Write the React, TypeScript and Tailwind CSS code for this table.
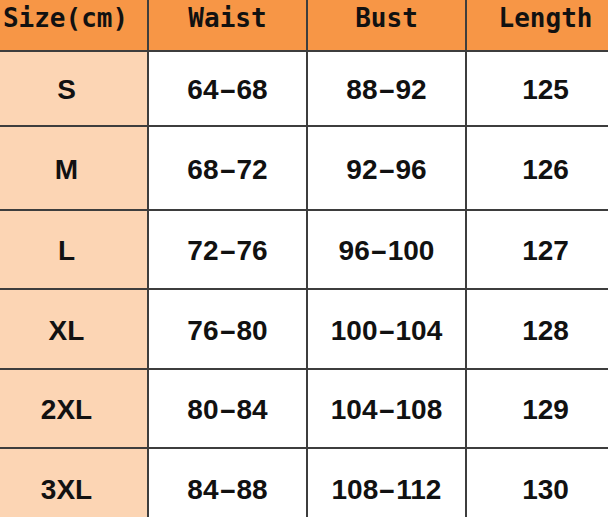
import React from "react";

const headers = ["Size(cm)", "Waist", "Bust", "Length"];
const rows: { size: string; waist: string; bust: string; length: string; h: string }[] = [
  { size: "S", waist: "64-68", bust: "88-92", length: "125", h: "h-[75px]" },
  { size: "M", waist: "68-72", bust: "92-96", length: "126", h: "h-[84px]" },
  { size: "L", waist: "72-76", bust: "96-100", length: "127", h: "h-[79px]" },
  { size: "XL", waist: "76-80", bust: "100-104", length: "128", h: "h-[80px]" },
  { size: "2XL", waist: "80-84", bust: "104-108", length: "129", h: "h-[79px]" },
  { size: "3XL", waist: "84-88", bust: "108-112", length: "130", h: "h-[80px]" },
];

function Range({ v }: { v: string }) {
  const parts = v.split("-");
  if (parts.length < 2) return <>{v}</>;
  return (
    <>
      {parts[0]}
      <span className="inline-block w-[18px] text-center scale-x-[1.9]">-</span>
      {parts[1]}
    </>
  );
}

const cellBase =
  "flex items-center justify-center border-r-2 border-b-2 border-[#3d3d3d] text-[#111] whitespace-nowrap";
const dataFont = "font-['Liberation_Sans',Arial,sans-serif] font-bold text-[28px] leading-none";

export default function App() {
  return (
    <div className="w-[608px] h-[517px] overflow-hidden bg-white">
      <div className="grid grid-cols-[149px_159px_159px_159px] w-[626px]">
        {headers.map((h, i) => (
          <div
            key={h}
            className={`${cellBase} h-[52px] bg-[#f79646] items-start font-['DejaVu_Sans_Mono','Liberation_Mono',monospace] font-bold text-[26px] leading-[36px] ${
              i === 0 ? "pr-[16px]" : ""
            }`}
          >
            {h}
          </div>
        ))}
        {rows.map((r) => (
          <React.Fragment key={r.size}>
            <div className={`${cellBase} ${r.h} ${dataFont} bg-[#fcd5b4] pr-[14px] pt-[3px]`}>{r.size}</div>
            <div className={`${cellBase} ${r.h} ${dataFont} bg-white pt-[3px]`}>
              <Range v={r.waist} />
            </div>
            <div className={`${cellBase} ${r.h} ${dataFont} bg-white pt-[3px]`}>
              <Range v={r.bust} />
            </div>
            <div className={`${cellBase} ${r.h} ${dataFont} bg-white pt-[3px]`}>{r.length}</div>
          </React.Fragment>
        ))}
      </div>
    </div>
  );
}
